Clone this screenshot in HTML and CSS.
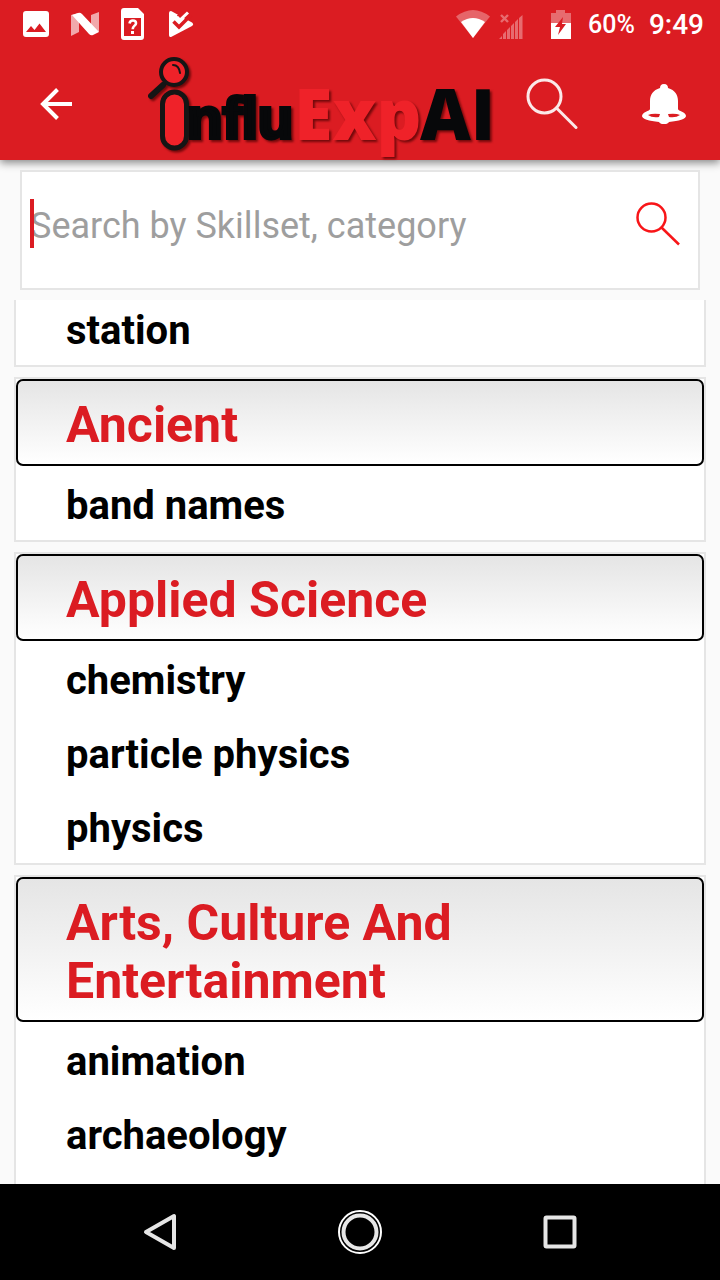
FILE: index.html
```html
<!DOCTYPE html>
<html lang="en">
<head>
<meta charset="utf-8">
<meta name="viewport" content="width=device-width, initial-scale=1">
<title>influExpAI</title>
<link rel="stylesheet" href="styles.css">
</head>
<body>
<header class="top">
  <div class="status">
    <div class="status-left">
      <svg width="26" height="26" viewBox="0 0 26 26"><path fill="#fff" fill-rule="evenodd" d="M3 0h20a3 3 0 0 1 3 3v20a3 3 0 0 1-3 3H3a3 3 0 0 1-3-3V3a3 3 0 0 1 3-3zM3 21h20l-6.500-8.500-5 6.500-3.500-4z"/></svg>
      <svg width="28" height="26" viewBox="0 0 28 26"><path fill="#fff" opacity=".62" d="M0 4l8-2v19l-8 4zM20 4l8-3v20l-8-5z"/><path fill="#fff" d="M1 4l6-2q2-1 4 1l17 18-6 3q-2 1-4-1z"/></svg>
      <svg width="24" height="32" viewBox="0 0 24 32"><path fill="#fff" fill-rule="evenodd" d="M3 0h14l6 6v23a3 3 0 0 1-3 3H3a3 3 0 0 1-3-3V3a3 3 0 0 1 3-3zM3 10v18h17V10z"/><path fill="none" stroke="#fff" stroke-width="2.600" d="M8.500 15.500q.5-3 3.300-3 3.200 0 3.200 2.700c0 2.500-3.300 2.500-3.300 6"/><path fill="#fff" d="M10 23h3v3h-3z"/></svg>
      <svg width="26" height="26" viewBox="0 0 26 26"><path fill="#fff" d="M2 0q-2 0-2 2v22q0 3 3 1.500L23 15q2-2 0-3.500L3 .5z"/><path fill="none" stroke="#db1c22" stroke-width="3.500" d="M4.500 10.500l5.500 5.500L22 4"/><path fill="none" stroke="#db1c22" stroke-width="3" d="M9 3.500l3 3L18 0"/><path fill="none" stroke="#fff" stroke-width="3" d="M8 6l3 3L19 1.500"/></svg>
    </div>
    <div class="status-right">
      <svg width="34" height="28" viewBox="0 0 34 28"><path fill="#fff" opacity=".32" d="M0 6.500Q17-6.500 34 6.500L17 28z"/><path fill="#fff" d="M5 12q12-8 24 0L17 28z"/></svg>
      <svg class="signal" width="24" height="25" viewBox="0 0 24 25"><g opacity=".35" stroke="#fff" fill="#fff"><path stroke-width="2.400" d="M2 1l7 7M9 1L2 8"/><path stroke="none" d="M0 25l3-3v3zM4 25v-5l3-3v8zM8 25v-9l3-3v12zM12 25V12l3-3v16zM16 25V8l3-3v20zM20 25V4l3.500-3v24z"/></g></svg>
      <svg class="battery" width="20" height="29" viewBox="0 0 20 29"><path fill="#fff" opacity=".35" d="M0 3h5V0h9v3h6v10H0z"/><path fill="#fff" d="M0 13h20v16H0z"/><path fill="#db1c22" d="M12 7L4 17h5l-2 8 8-11h-4z"/></svg>
      <span class="percent">60%</span>
      <time class="clock">9:49</time>
    </div>
  </div>
  <div class="appbar">
    <button class="icon-btn" aria-label="Back"><svg width="32" height="32" viewBox="0 0 32 32"><path fill="none" stroke="#fff" stroke-width="4" d="M32 16H3M17.500 1.500L3 16l14.500 14.500"/></svg></button>
    <svg class="logo" width="352" height="98" viewBox="0 0 352 98" role="img" aria-label="influExpAI">
      <g class="logo-mark">
        <path class="ink-line" stroke-width="6" stroke-linecap="round" d="M18 30L6 41"/>
        <circle class="badge" cx="29" cy="17" r="13" stroke-width="4"/>
        <path class="ink-line" stroke-width="2" stroke-linecap="round" d="M28 10q6 0 7 8"/>
        <rect class="badge" x="17.500" y="37" width="24" height="56" rx="12" stroke-width="5"/>
      </g>
      <text class="logo-text heavy ink" x="42" y="83">nflu</text>
      <text class="logo-text bright" x="149" y="85">Exp</text>
      <text class="logo-text ink" x="275" y="85">AI</text>
    </svg>
    <button class="icon-btn find" aria-label="Search"><svg width="52" height="52" viewBox="0 0 52 52"><g fill="none" stroke="#fbe9e9" stroke-width="3"><circle cx="18.500" cy="18.500" r="16.500"/><path stroke-linecap="round" d="M30.500 30L50 49.500"/></g></svg></button>
    <button class="icon-btn bell" aria-label="Notifications"><svg width="44" height="40" viewBox="0 0 44 40"><path fill="#fff" fill-rule="evenodd" d="M22 0c3 0 4 2 4 4 7 2 10 7 10 13v8c0 2 8 3 8 7 0 3-7 5-17 6-2 3-8 3-10 0-10-1-17-3-17-6 0-4 8-5 8-7v-8C8 11 11 6 18 4c0-2 1-4 4-4zM6 31q4 3 11 2l1-3q-8-1-12 1zM38 31q-4 3-11 2l-1-3q8-1 12 1z"/></svg></button>
  </div>
</header>
<form class="search">
  <input class="search-input" type="text" aria-label="Search by Skillset, category" placeholder="Search by Skillset, category">
  <span class="caret"></span>
  <button class="icon-btn" type="button" aria-label="Search"><svg width="44" height="44" viewBox="0 0 44 44"><g fill="none" stroke="#f81518" stroke-width="2.500"><circle cx="15.500" cy="15.500" r="14"/><path d="M25.500 25.500L43 42.500"/></g></svg></button>
</form>
<main class="list">
  <section class="card card-continued">
    <ul class="items"><li><a href="#">station</a></li></ul>
  </section>
  <section class="card">
    <h2>Ancient</h2>
    <ul class="items"><li><a href="#">band names</a></li></ul>
  </section>
  <section class="card">
    <h2>Applied Science</h2>
    <ul class="items"><li><a href="#">chemistry</a></li><li><a href="#">particle physics</a></li><li><a href="#">physics</a></li></ul>
  </section>
  <section class="card card-open">
    <h2>Arts, Culture And Entertainment</h2>
    <ul class="items"><li><a href="#">animation</a></li><li><a href="#">archaeology</a></li></ul>
  </section>
</main>
<nav class="navbar">
  <button class="icon-btn" aria-label="Back"><svg width="44" height="44" viewBox="0 0 44 44"><path fill="none" stroke="#e6e6e6" stroke-width="4" stroke-linejoin="round" d="M36 6v32L8 22z"/></svg></button>
  <button class="icon-btn" aria-label="Home"><svg width="44" height="44" viewBox="0 0 44 44"><g fill="none"><circle cx="22" cy="22" r="21" stroke="#fff" stroke-width="2"/><circle cx="22" cy="22" r="16.500" stroke="#e6e6e6" stroke-width="4"/></g></svg></button>
  <button class="icon-btn" aria-label="Recent apps"><svg width="44" height="44" viewBox="0 0 44 44"><rect x="7.500" y="7.500" width="29" height="29" rx="1" fill="none" stroke="#e6e6e6" stroke-width="4"/></svg></button>
</nav>
</body>
</html>
```
FILE: styles.css
```css
* { box-sizing: border-box; }
body {
  margin: 0;
  height: 100vh;
  display: flex;
  flex-direction: column;
  background: #fafafa;
  color: #000;
  font-family: Roboto, sans-serif;
}
svg { display: block; flex: none; }
.icon-btn { flex: none; margin: 0; padding: 0; border: 0; background: none; }
.top {
  flex: none;
  background: #db1c22;
  box-shadow: 0 3px 8px rgba(0, 0, 0, .45);
}
.status {
  height: 48px;
  padding: 0 16px 0 23px;
  display: flex;
  align-items: center;
  justify-content: space-between;
}
.status-left { display: flex; align-items: center; gap: 22px; }
.status-left svg:last-child { margin-left: 2px; }
.status-right { display: flex; align-items: center; color: #fff; font-weight: 500; }
.signal { margin-left: 9px; margin-top: 4px; }
.battery { margin-left: 28px; }
.percent { margin-left: 17px; padding-top: 2px; font-size: 25px; line-height: 32px; }
.clock { margin-left: 14px; padding-top: 2px; font-size: 28px; line-height: 32px; }
.appbar {
  height: 112px;
  padding: 0 34px 0 40px;
  display: flex;
  align-items: center;
}
.logo { margin-left: 73px; overflow: visible; }
.logo-mark, .logo-text { filter: drop-shadow(2px 2px 1px rgba(70, 0, 0, .7)); }
.logo-text { font-family: "Open Sans", sans-serif; font-size: 70px; font-weight: 800; }
.heavy {
  font-family: "Liberation Sans", sans-serif;
  font-size: 58px;
  stroke: #07080a;
  stroke-width: 4px;
}
.ink { fill: #07080a; }
.bright { fill: #ef2229; }
.ink-line { fill: none; stroke: #151515; }
.badge { fill: #ef2229; stroke: #151515; }
.find { margin-left: 29px; }
.bell { margin-left: auto; }
.search {
  position: relative;
  flex: none;
  margin: 10px 20px;
  height: 120px;
  padding: 30px 18px 0 8px;
  display: flex;
  align-items: flex-start;
  background: #fff;
  border: 2px solid #e5e5e5;
}
.search-input {
  flex: 1;
  min-width: 0;
  height: 48px;
  margin: 0;
  padding: 0;
  border: 0;
  outline: 0;
  background: none;
  font: 36px Roboto, sans-serif;
}
.search-input::placeholder { color: #9e9e9e; opacity: 1; }
.caret {
  position: absolute;
  left: 8px;
  top: 27px;
  width: 4px;
  height: 49px;
  background: #db1c22;
}
.list {
  flex: 1;
  min-height: 0;
  overflow: hidden;
  padding: 0 14px;
  display: flex;
  flex-direction: column;
}
.card { flex: none; margin-bottom: 10px; background: #fff; border: 2px solid #e5e5e5; }
.card-continued { border-top: 0; }
.card-open { flex: 1 0 auto; margin-bottom: 0; border-bottom: 0; }
.card h2 {
  margin: 0;
  padding: 15px 48px 10px;
  border: 2px solid #000;
  border-radius: 7px;
  background: linear-gradient(#e5e5e5, #fff);
  color: #db1c22;
  font-size: 50px;
  line-height: 58px;
  font-weight: 700;
}
.items { margin: 0; padding: 0; list-style: none; }
.items a {
  display: block;
  padding: 17px 50px 11px;
  color: #000;
  font-size: 40px;
  line-height: 46px;
  font-weight: 700;
  text-decoration: none;
}
.card-continued a { padding-top: 8px; }
.navbar {
  flex: none;
  height: 96px;
  padding: 0 138px;
  display: flex;
  align-items: center;
  justify-content: space-between;
  background: #000;
}
```
